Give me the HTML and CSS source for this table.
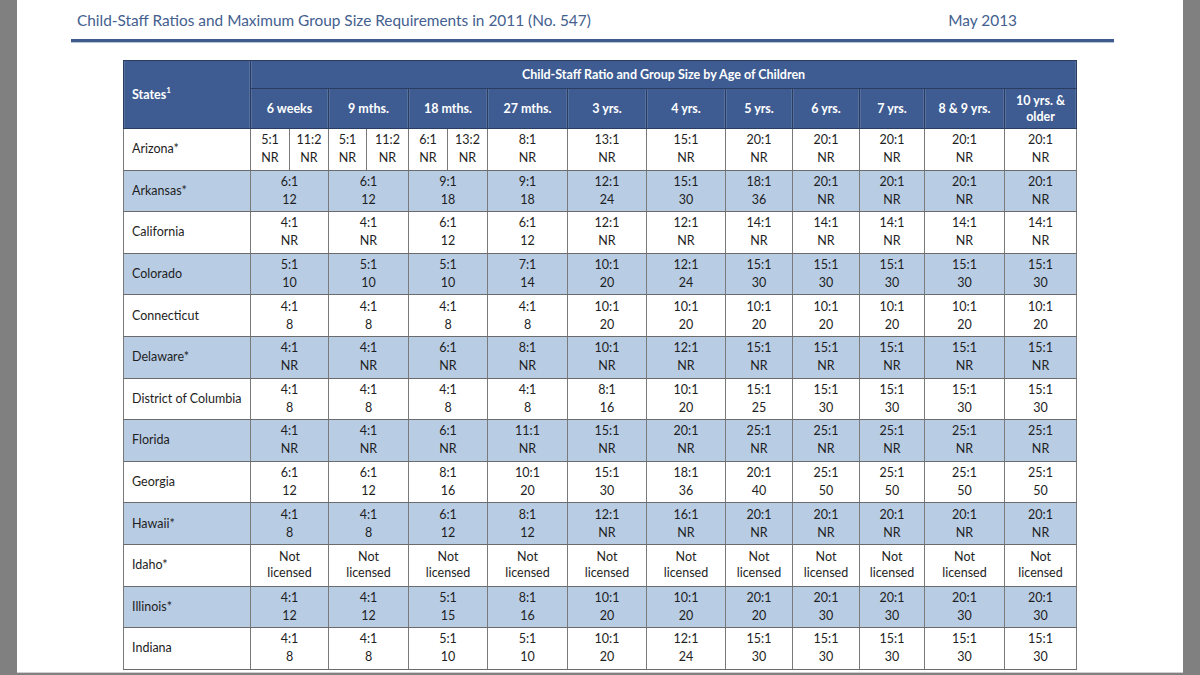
FILE: index.html
```html
<!DOCTYPE html>
<html lang="en">
<head>
<meta charset="utf-8">
<title>Child-Staff Ratios and Maximum Group Size Requirements in 2011</title>
<link rel="stylesheet" href="styles.css">
</head>
<body>
<div class="viewer">
  <div class="gutter"></div>
  <div class="page">
    <header class="doc-head">
      <h1 class="doc-title">Child-Staff Ratios and Maximum Group Size Requirements in 2011 (No. 547)</h1>
      <div class="doc-date">May 2013</div>
    </header>
    <div class="rule"></div>
    <table class="ratios">
      <colgroup>
        <col class="c-state">
        <col class="c39"><col class="c39">
        <col class="c38"><col class="c42">
        <col class="c39"><col class="c40">
        <col class="c80"><col class="c79"><col class="c79">
        <col class="c67"><col class="c67"><col class="c65">
        <col class="c80"><col class="c72">
      </colgroup>
      <thead>
        <tr class="h1">
          <th rowspan="2" class="th-state"><span class="hbox">States<sup>1</sup></span></th>
          <th colspan="14" class="th-group">Child-Staff Ratio and Group Size by Age of Children</th>
        </tr>
        <tr class="h2">
          <th colspan="2">6 weeks</th>
          <th colspan="2">9 mths.</th>
          <th colspan="2">18 mths.</th>
          <th>27 mths.</th>
          <th>3 yrs.</th>
          <th>4 yrs.</th>
          <th>5 yrs.</th>
          <th>6 yrs.</th>
          <th>7 yrs.</th>
          <th>8 &amp; 9 yrs.</th>
          <th class="two">10 yrs. &amp;<br>older</th>
        </tr>
      </thead>
      <tbody>
        <tr>
          <td class="st">Arizona*</td>
          <td>5:1<br>NR</td><td>11:2<br>NR</td>
          <td>5:1<br>NR</td><td>11:2<br>NR</td>
          <td>6:1<br>NR</td><td>13:2<br>NR</td>
          <td>8:1<br>NR</td><td>13:1<br>NR</td><td>15:1<br>NR</td><td>20:1<br>NR</td><td>20:1<br>NR</td><td>20:1<br>NR</td><td>20:1<br>NR</td><td>20:1<br>NR</td>
        </tr>
        <tr class="alt">
          <td class="st">Arkansas*</td>
          <td colspan="2">6:1<br>12</td><td colspan="2">6:1<br>12</td><td colspan="2">9:1<br>18</td>
          <td>9:1<br>18</td><td>12:1<br>24</td><td>15:1<br>30</td><td>18:1<br>36</td><td>20:1<br>NR</td><td>20:1<br>NR</td><td>20:1<br>NR</td><td>20:1<br>NR</td>
        </tr>
        <tr>
          <td class="st">California</td>
          <td colspan="2">4:1<br>NR</td><td colspan="2">4:1<br>NR</td><td colspan="2">6:1<br>12</td>
          <td>6:1<br>12</td><td>12:1<br>NR</td><td>12:1<br>NR</td><td>14:1<br>NR</td><td>14:1<br>NR</td><td>14:1<br>NR</td><td>14:1<br>NR</td><td>14:1<br>NR</td>
        </tr>
        <tr class="alt">
          <td class="st">Colorado</td>
          <td colspan="2">5:1<br>10</td><td colspan="2">5:1<br>10</td><td colspan="2">5:1<br>10</td>
          <td>7:1<br>14</td><td>10:1<br>20</td><td>12:1<br>24</td><td>15:1<br>30</td><td>15:1<br>30</td><td>15:1<br>30</td><td>15:1<br>30</td><td>15:1<br>30</td>
        </tr>
        <tr>
          <td class="st">Connecticut</td>
          <td colspan="2">4:1<br>8</td><td colspan="2">4:1<br>8</td><td colspan="2">4:1<br>8</td>
          <td>4:1<br>8</td><td>10:1<br>20</td><td>10:1<br>20</td><td>10:1<br>20</td><td>10:1<br>20</td><td>10:1<br>20</td><td>10:1<br>20</td><td>10:1<br>20</td>
        </tr>
        <tr class="alt">
          <td class="st">Delaware*</td>
          <td colspan="2">4:1<br>NR</td><td colspan="2">4:1<br>NR</td><td colspan="2">6:1<br>NR</td>
          <td>8:1<br>NR</td><td>10:1<br>NR</td><td>12:1<br>NR</td><td>15:1<br>NR</td><td>15:1<br>NR</td><td>15:1<br>NR</td><td>15:1<br>NR</td><td>15:1<br>NR</td>
        </tr>
        <tr>
          <td class="st">District of Columbia</td>
          <td colspan="2">4:1<br>8</td><td colspan="2">4:1<br>8</td><td colspan="2">4:1<br>8</td>
          <td>4:1<br>8</td><td>8:1<br>16</td><td>10:1<br>20</td><td>15:1<br>25</td><td>15:1<br>30</td><td>15:1<br>30</td><td>15:1<br>30</td><td>15:1<br>30</td>
        </tr>
        <tr class="alt">
          <td class="st">Florida</td>
          <td colspan="2">4:1<br>NR</td><td colspan="2">4:1<br>NR</td><td colspan="2">6:1<br>NR</td>
          <td>11:1<br>NR</td><td>15:1<br>NR</td><td>20:1<br>NR</td><td>25:1<br>NR</td><td>25:1<br>NR</td><td>25:1<br>NR</td><td>25:1<br>NR</td><td>25:1<br>NR</td>
        </tr>
        <tr>
          <td class="st">Georgia</td>
          <td colspan="2">6:1<br>12</td><td colspan="2">6:1<br>12</td><td colspan="2">8:1<br>16</td>
          <td>10:1<br>20</td><td>15:1<br>30</td><td>18:1<br>36</td><td>20:1<br>40</td><td>25:1<br>50</td><td>25:1<br>50</td><td>25:1<br>50</td><td>25:1<br>50</td>
        </tr>
        <tr class="alt">
          <td class="st">Hawaii*</td>
          <td colspan="2">4:1<br>8</td><td colspan="2">4:1<br>8</td><td colspan="2">6:1<br>12</td>
          <td>8:1<br>12</td><td>12:1<br>NR</td><td>16:1<br>NR</td><td>20:1<br>NR</td><td>20:1<br>NR</td><td>20:1<br>NR</td><td>20:1<br>NR</td><td>20:1<br>NR</td>
        </tr>
        <tr class="nl">
          <td class="st">Idaho*</td>
          <td colspan="2">Not<br>licensed</td><td colspan="2">Not<br>licensed</td><td colspan="2">Not<br>licensed</td>
          <td>Not<br>licensed</td><td>Not<br>licensed</td><td>Not<br>licensed</td><td>Not<br>licensed</td><td>Not<br>licensed</td><td>Not<br>licensed</td><td>Not<br>licensed</td><td>Not<br>licensed</td>
        </tr>
        <tr class="alt">
          <td class="st">Illinois*</td>
          <td colspan="2">4:1<br>12</td><td colspan="2">4:1<br>12</td><td colspan="2">5:1<br>15</td>
          <td>8:1<br>16</td><td>10:1<br>20</td><td>10:1<br>20</td><td>20:1<br>20</td><td>20:1<br>30</td><td>20:1<br>30</td><td>20:1<br>30</td><td>20:1<br>30</td>
        </tr>
        <tr>
          <td class="st">Indiana</td>
          <td colspan="2">4:1<br>8</td><td colspan="2">4:1<br>8</td><td colspan="2">5:1<br>10</td>
          <td>5:1<br>10</td><td>10:1<br>20</td><td>12:1<br>24</td><td>15:1<br>30</td><td>15:1<br>30</td><td>15:1<br>30</td><td>15:1<br>30</td><td>15:1<br>30</td>
        </tr>
      </tbody>
    </table>
  </div>
  <div class="gutter"></div>
</div>
</body>
</html>
```

FILE: styles.css
```css
html, body {
  margin: 0;
  padding: 0;
}
body {
  background: #808080;
  font-family: "Lato", "Liberation Sans", sans-serif;
  color: #1e1e1e;
}
.viewer {
  display: flex;
  height: 675px;
  overflow: hidden;
}
.gutter {
  width: 17px;
  flex: none;
  background: #808080;
}
.page {
  width: 1166px;
  flex: none;
  height: 672px;
  background: #ffffff;
  border-bottom: 1px solid #cfcfcf;
  overflow: hidden;
}
.doc-head {
  display: flex;
  justify-content: space-between;
  align-items: baseline;
  padding: 10px 166px 0 60px;
  height: 20px;
  color: #43608f;
}
.doc-title {
  margin: 0;
  font-family: "Lato", "Liberation Sans", sans-serif;
  font-weight: normal;
  font-size: 15.4px;
  line-height: 20px;
}
.doc-date {
  font-family: "Lato", "Liberation Sans", sans-serif;
  font-size: 15.4px;
  line-height: 20px;
}
.rule {
  margin: 9px 69px 0 54px;
  height: 3px;
  background: #3e5b8d;
  box-shadow: 0 1px 0 #b7c3d6;
}
.ratios {
  margin: 18px 0 0 106px;
  width: 953px;
  table-layout: fixed;
  border-collapse: collapse;
  font-size: 12.5px;
}
.c-state { width: 127px; }
.c38 { width: 38px; }
.c39 { width: 39px; }
.c40 { width: 40px; }
.c42 { width: 42px; }
.c65 { width: 65px; }
.c67 { width: 67px; }
.c72 { width: 72px; }
.c79 { width: 79px; }
.c80 { width: 80px; }

.ratios th {
  background: #3e5c91;
  color: #ffffff;
  font-weight: bold;
  border: 1px solid #2a3d60;
  padding: 0;
  text-align: center;
  vertical-align: middle;
  box-shadow: inset 6px 0 0 -5px rgba(255,255,255,0.12), inset -6px 0 0 -5px rgba(255,255,255,0.12);
}
.ratios .h1 th { height: 27px; }
.ratios .h2 th { height: 39px; line-height: 16px; }
.ratios .th-state {
  text-align: left;
  padding-left: 8px;
}
.hbox sup {
  font-size: 8px;
  vertical-align: 6px;
  line-height: 0;
}
.ratios td {
  border: 1px solid #6b6b6b;
  border-left-color: #7a7a7a;
  border-right-color: #7a7a7a;
  text-align: center;
  vertical-align: middle;
  padding: 0;
  height: 40.6px;
  line-height: 18px;
  background: #ffffff;
}
.ratios tr.alt td {
  background: #b8cce4;
}
.ratios tr.nl td {
  line-height: 16px;
}
.ratios td.st {
  text-align: left;
  padding-left: 8px;
}
```
